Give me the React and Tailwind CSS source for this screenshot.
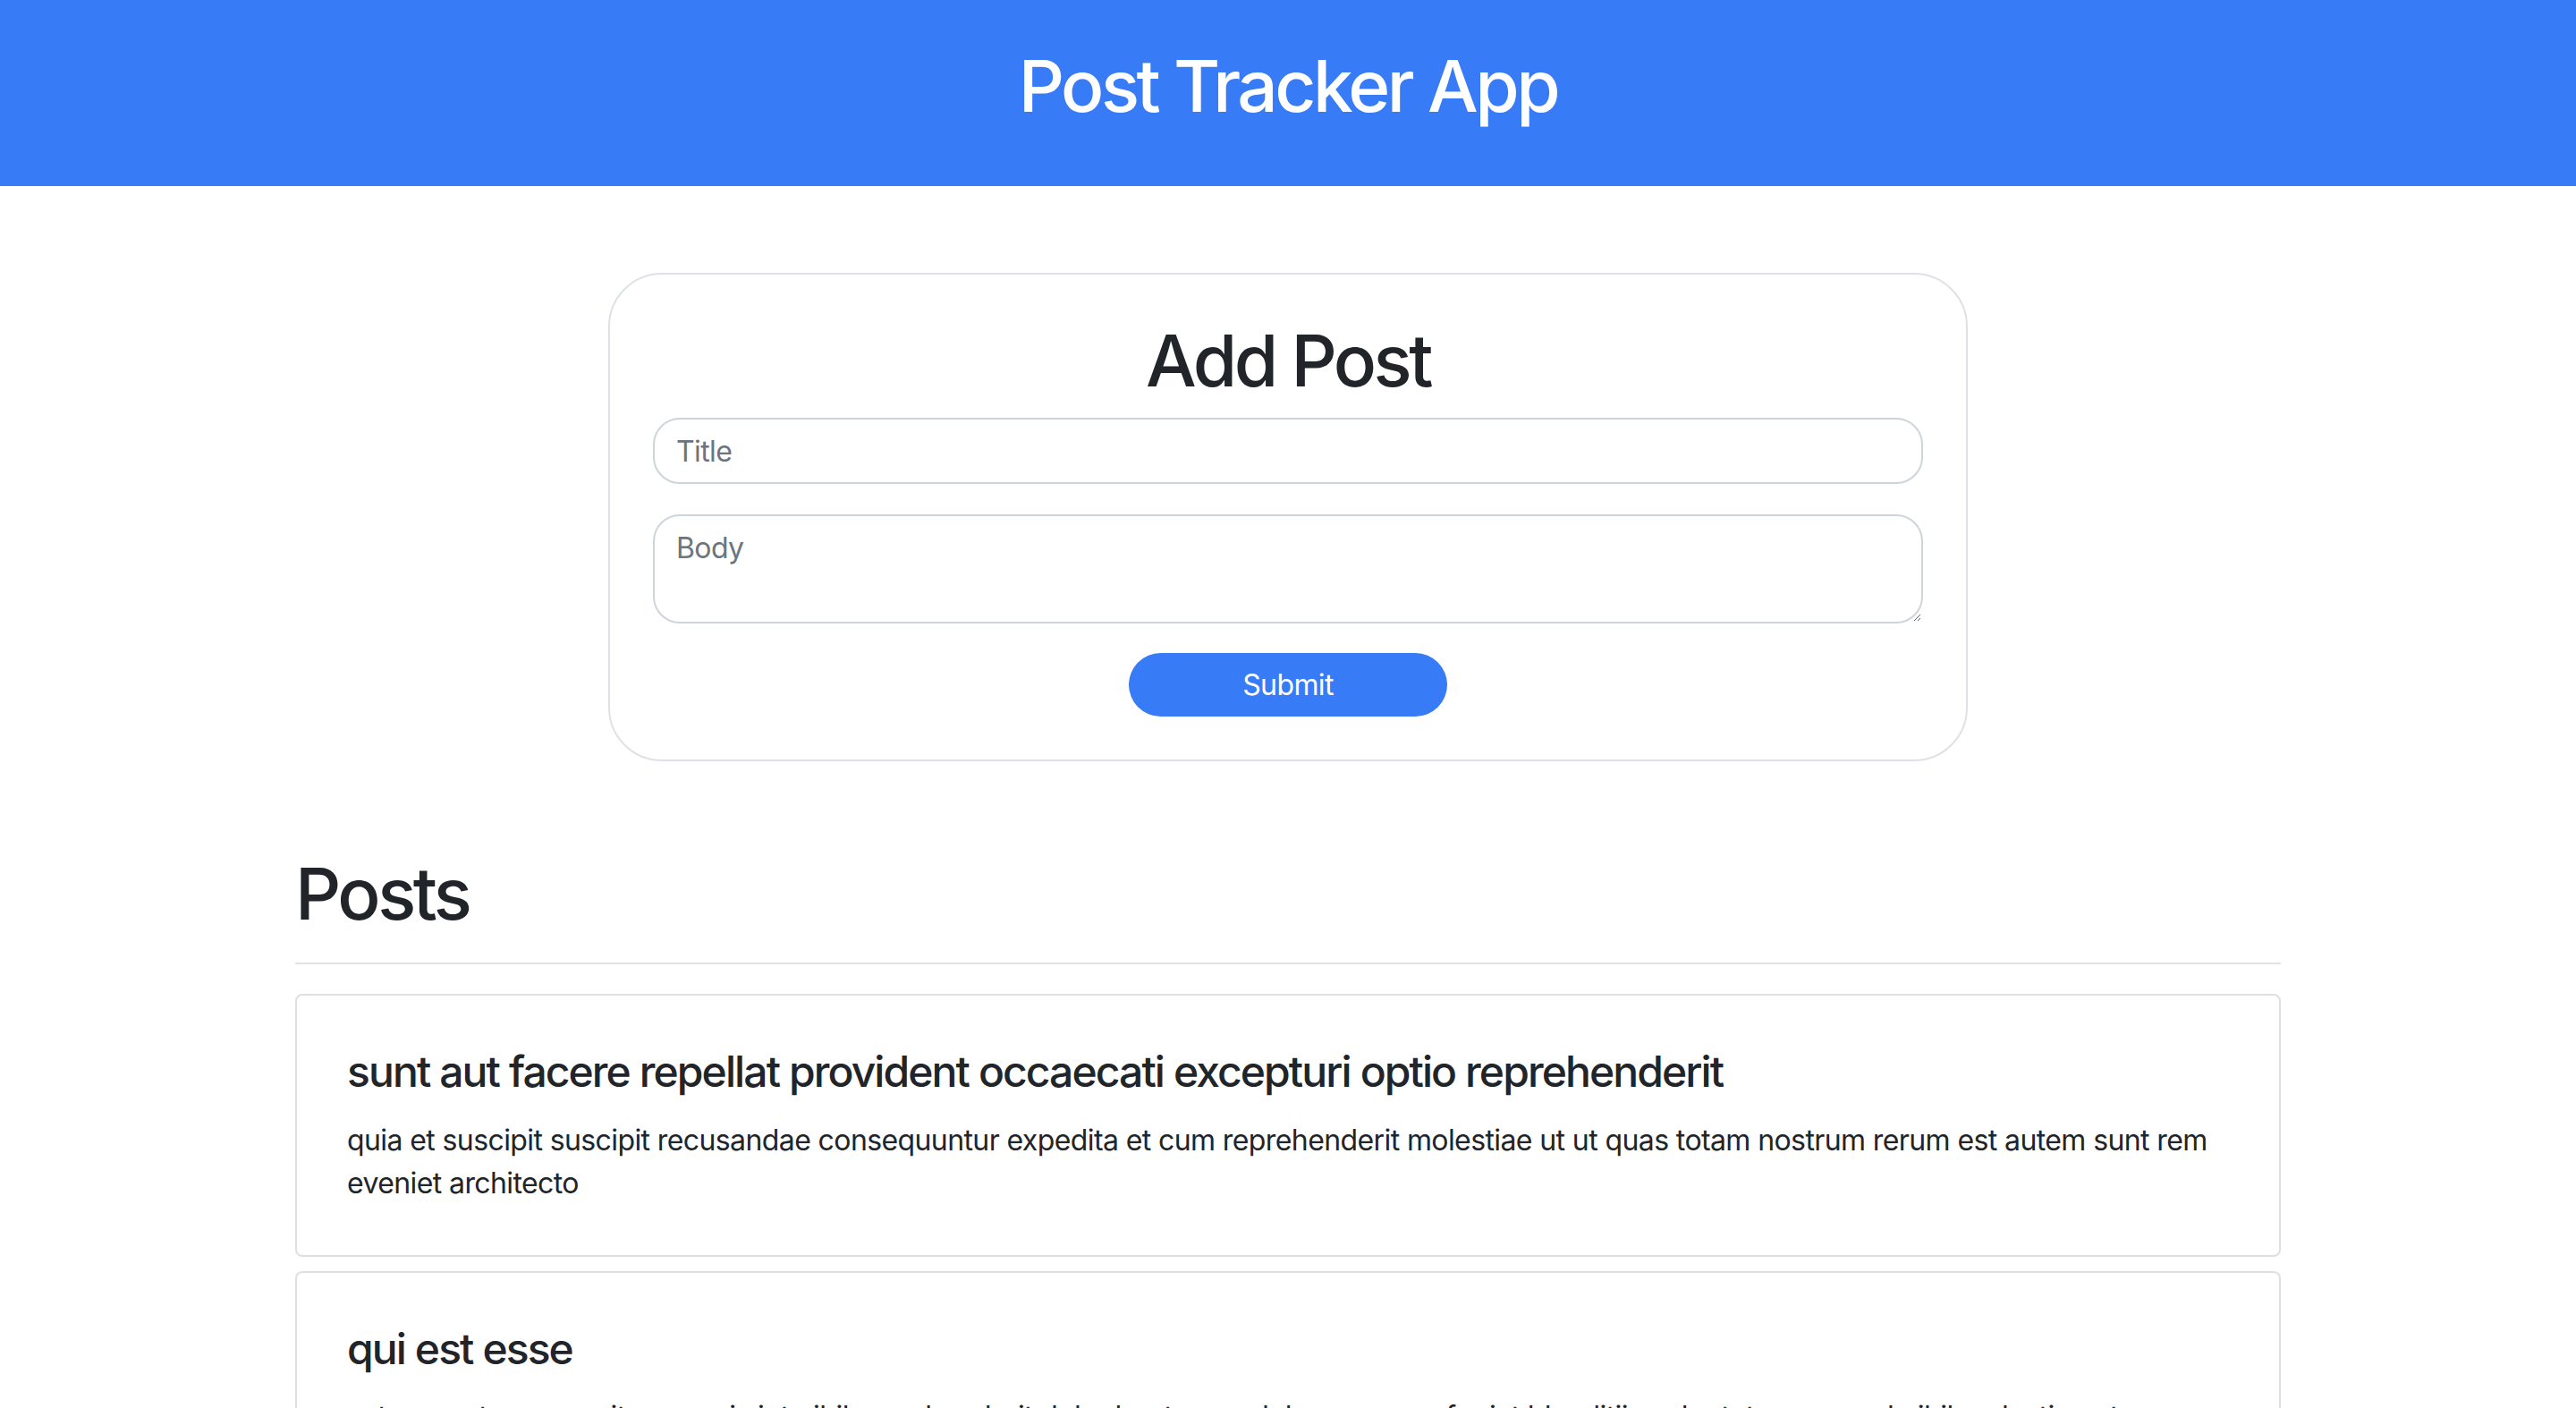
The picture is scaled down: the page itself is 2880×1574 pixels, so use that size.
import { useState } from "react";

const initialPosts = [
  {
    id: 1,
    title:
      "sunt aut facere repellat provident occaecati excepturi optio reprehenderit",
    body: "quia et suscipit\nsuscipit recusandae consequuntur expedita et cum\nreprehenderit molestiae ut ut quas totam\nnostrum rerum est autem sunt rem eveniet architecto",
  },
  {
    id: 2,
    title: "qui est esse",
    body: "est rerum tempore vitae\nsequi sint nihil reprehenderit dolor beatae ea dolores neque\nfugiat blanditiis voluptate porro vel nihil molestiae ut reiciendis\nqui aperiam non debitis possimus qui neque nisi nulla",
  },
  {
    id: 3,
    title: "ea molestias quasi exercitationem repellat qui ipsa sit aut",
    body: "et iusto sed quo iure\nvoluptatem occaecati omnis eligendi aut ad\nvoluptatem doloribus vel accusantium quis pariatur\nmolestiae porro eius odio et labore et velit aut",
  },
];

function PostCard({ post }) {
  return (
    <div className="rounded-[8px] border-2 border-[#dfdfdf] p-[56px]">
      <h4 className="mb-[24px] text-[48px] leading-[57.6px] font-medium tracking-[-1.9px]">
        {post.title}
      </h4>
      <p className="text-[32px] leading-[48px] tracking-[-0.6px]">{post.body}</p>
    </div>
  );
}

export default function App() {
  const [posts, setPosts] = useState(initialPosts);
  const [formData, setFormData] = useState({ title: "", body: "" });

  const handleChange = (e) => {
    setFormData({ ...formData, [e.target.name]: e.target.value });
  };

  const handleSubmit = (e) => {
    e.preventDefault();
    if (!formData.title || !formData.body) return;
    setPosts([{ id: Date.now(), ...formData }, ...posts]);
    setFormData({ title: "", body: "" });
  };

  return (
    <div className="min-h-screen bg-white font-['Inter','Liberation_Sans',sans-serif] text-[#212529]">
      <header className="bg-[#387bf6] py-[48px] text-center">
        <h1 className="mb-[16px] text-[80px] leading-[96px] font-medium tracking-[-3.5px] text-white">
          Post Tracker App
        </h1>
      </header>

      <main className="mx-auto w-[2220px]">
        <form
          onSubmit={handleSubmit}
          className="mx-auto mt-[97px] flex w-[1520px] flex-col items-center rounded-[60px] border-2 border-[#dee2e6] p-[48px]"
        >
          <h2 className="mb-[16px] text-[80px] leading-[96px] font-medium tracking-[-3.5px]">
            Add Post
          </h2>
          <input
            type="text"
            name="title"
            value={formData.title}
            onChange={handleChange}
            placeholder="Title"
            className="h-[74px] w-full rounded-[30px] border-2 border-[#ced4da] px-[24px] text-[32px] tracking-[-0.6px] text-[#495057] outline-none placeholder:text-[#6c757d]"
          />
          <textarea
            name="body"
            value={formData.body}
            onChange={handleChange}
            placeholder="Body"
            className="mt-[34px] h-[122px] w-full rounded-[30px] border-2 border-[#ced4da] px-[24px] py-[12px] text-[32px] leading-[48px] tracking-[-0.6px] text-[#495057] outline-none placeholder:text-[#6c757d]"
          />
          <button
            type="submit"
            className="mt-[33px] h-[71px] w-[356px] rounded-full bg-[#387bf6] text-[32px] tracking-[-0.6px] text-white"
          >
            Submit
          </button>
        </form>

        <section className="mt-[100px]">
          <h2 className="text-[80px] leading-[96px] font-medium tracking-[-3.5px]">
            Posts
          </h2>
          <hr className="mt-[29px] border-t-2 border-[#e2e2e2]" />
          <div className="mt-[33px] flex flex-col gap-[16px] pb-[48px]">
            {posts.map((post) => (
              <PostCard key={post.id} post={post} />
            ))}
          </div>
        </section>
      </main>
    </div>
  );
}
